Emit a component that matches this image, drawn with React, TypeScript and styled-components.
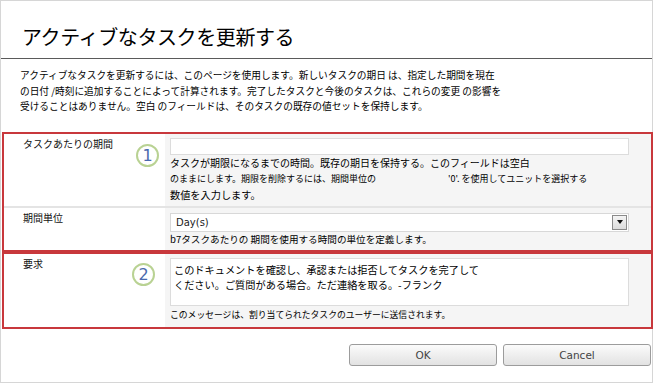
import React from "react";
import styled, { createGlobalStyle } from "styled-components";

const GlobalStyle = createGlobalStyle`
  html, body {
    margin: 0;
    padding: 0;
    background: #fff;
  }
  body {
    width: 654px;
    height: 384px;
    overflow: hidden;
    font-family: "Noto Sans CJK JP", "Liberation Sans", sans-serif;
    color: #111;
  }
`;

const Frame = styled.div`
  width: 653px;
  height: 383px;
  box-sizing: border-box;
  border: 1px solid #d6d6d6;
  display: flex;
  flex-direction: column;
`;

const Header = styled.header`
  height: 58px;
  box-sizing: border-box;
  padding: 24px 0 0 21px;
  border-bottom: 1px solid #5a5a5a;
`;

const Title = styled.h1`
  margin: 0;
  font-size: 20px;
  line-height: 24px;
  font-weight: 400;
  color: #000;
  letter-spacing: -0.4px;
`;

const Intro = styled.p`
  margin: 0;
  padding: 9px 20px 0 19px;
  font-size: 9.7px;
  line-height: 15.5px;
  color: #000;
`;

const Section = styled.section<{ $first?: boolean }>`
  margin: ${(p) => (p.$first ? "17px" : "0")} 0 0 1px;
  width: 651px;
  box-sizing: border-box;
  border: 2px solid #c8383c;
`;

const Row = styled.div<{ $divider?: boolean }>`
  display: grid;
  grid-template-columns: 126px 35px 1fr;
  ${(p) => (p.$divider ? "border-bottom: 2px solid #e4e4e4;" : "")}
`;

const Label = styled.div`
  padding: 2px 0 0 19px;
  font-size: 10px;
  line-height: 16px;
  background: #fff;
`;

const MarkerCell = styled.div<{ $top: number; $shift: number }>`
  background: #fff;
  padding-top: ${(p) => p.$top}px;
  padding-left: ${(p) => 6 + p.$shift}px;
`;

const Marker = styled.span`
  display: flex;
  align-items: center;
  justify-content: center;
  width: 23px;
  height: 23px;
  box-sizing: border-box;
  border: 2px solid #b9d293;
  border-radius: 50%;
  font-family: "DejaVu Sans", "Liberation Sans", sans-serif;
  font-size: 16px;
  color: #4a69ad;
  background: #fff;
`;

const Field = styled.div<{ $top: number; $bottom: number }>`
  background: #f5f5f5;
  padding: ${(p) => p.$top}px 22px ${(p) => p.$bottom}px 5px;
`;

const TextInput = styled.div`
  height: 17px;
  box-sizing: border-box;
  background: #fff;
  border: 1px solid #dcdcdc;
`;

const Help = styled.div<{ $size: number; $lh: number }>`
  font-size: ${(p) => p.$size}px;
  line-height: ${(p) => p.$lh}px;
  color: #000;
  white-space: nowrap;
`;

const Gap = styled.span`
  display: inline-block;
  width: 72px;
`;

const SelectBox = styled.div`
  height: 19px;
  box-sizing: border-box;
  background: #fff;
  border: 1px solid #d8d8d8;
  display: flex;
  align-items: center;
  justify-content: space-between;
  padding: 0 1px 0 5px;
  font-family: "DejaVu Sans", "Liberation Sans", sans-serif;
  font-size: 10px;
  color: #222;
`;

const DropButton = styled.span`
  width: 15px;
  height: 15px;
  box-sizing: border-box;
  border: 1px solid #8a8a8a;
  background: linear-gradient(#f4f4f4, #dcdcdc);
  display: flex;
  align-items: center;
  justify-content: center;
`;

const Arrow = styled.span`
  width: 0;
  height: 0;
  border-left: 3.5px solid transparent;
  border-right: 3.5px solid transparent;
  border-top: 4px solid #111;
`;

const MessageBox = styled.div`
  height: 48px;
  box-sizing: border-box;
  background: #fff;
  border: 1px solid #dcdcdc;
  padding: 3px 0 0 3px;
  font-size: 10.2px;
  line-height: 15px;
  color: #000;
`;

const Footer = styled.footer`
  display: flex;
  justify-content: flex-end;
  gap: 6px;
  padding: 15px 1px 0 0;
`;

const Button = styled.button`
  width: 148px;
  height: 22px;
  box-sizing: border-box;
  border: 1px solid #9c9c9c;
  border-radius: 3px;
  background: linear-gradient(#fbfbfb, #e2e2e2);
  font-family: "DejaVu Sans", "Liberation Sans", sans-serif;
  font-size: 10.5px;
  color: #444;
  padding: 0;
`;

export default function App() {
  return (
    <>
      <GlobalStyle />
      <Frame>
        <Header>
          <Title>アクティブなタスクを更新する</Title>
        </Header>
        <Intro>
          アクティブなタスクを更新するには、このページを使用します。新しいタスクの期日 は、指定した期間を現在
          <br />
          の日付 /時刻に追加することによって計算されます。完了したタスクと今後のタスクは、これらの変更 の影響を
          <br />
          受けることはありません。空白 のフィールドは、そのタスクの既存の値セットを保持します。
        </Intro>

        <Section $first>
          <Row $divider>
            <Label>タスクあたりの期間</Label>
            <MarkerCell $top={10} $shift={0}>
              <Marker>1</Marker>
            </MarkerCell>
            <Field $top={4} $bottom={3}>
              <TextInput />
              <Help $size={10} $lh={16}>
                タスクが期限になるまでの時間。既存の期日を保持する。このフィールドは空白
              </Help>
              <Help $size={9} $lh={16}>
                のままにします。期限を削除するには、期間単位の<Gap />'0'. を使用してユニットを選択する
              </Help>
              <Help $size={10.2} $lh={16}>
                数値を入力します。
              </Help>
            </Field>
          </Row>
          <Row>
            <Label>期間単位</Label>
            <MarkerCell $top={0} $shift={0} />
            <Field $top={5} $bottom={4}>
              <SelectBox>
                Day(s)
                <DropButton>
                  <Arrow />
                </DropButton>
              </SelectBox>
              <Help $size={9.6} $lh={14}>
                b7タスクあたりの 期間を使用する時間の単位を定義します。
              </Help>
            </Field>
          </Row>
        </Section>

        <Section>
          <Row>
            <Label>要求</Label>
            <MarkerCell $top={9} $shift={-4}>
              <Marker>2</Marker>
            </MarkerCell>
            <Field $top={4} $bottom={4}>
              <MessageBox>
                このドキュメントを確認し、承認または拒否してタスクを完了して
                <br />
                ください。ご質問がある場合。ただ連絡を取る。-フランク
              </MessageBox>
              <Help $size={8.8} $lh={17}>
                このメッセージは、割り当てられたタスクのユーザーに送信されます。
              </Help>
            </Field>
          </Row>
        </Section>

        <Footer>
          <Button>OK</Button>
          <Button>Cancel</Button>
        </Footer>
      </Frame>
    </>
  );
}
